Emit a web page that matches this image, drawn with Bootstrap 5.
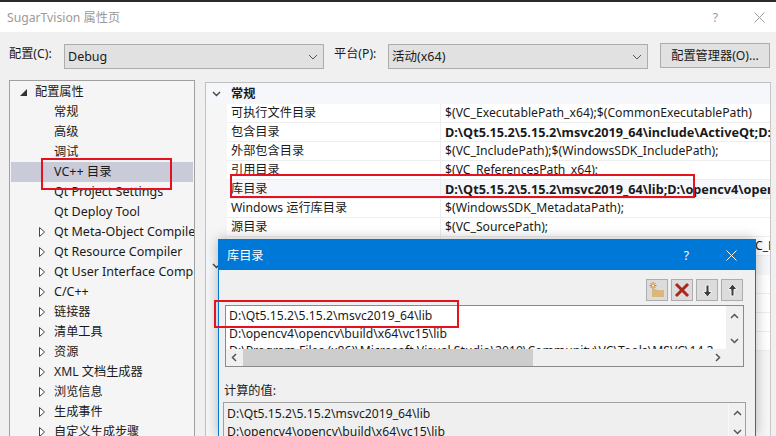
<!DOCTYPE html>
<html lang="zh"><head><meta charset="utf-8">
<link href="https://cdn.jsdelivr.net/npm/bootstrap@5.3.0/dist/css/bootstrap.min.css" rel="stylesheet">
<style>
html,body{width:776px;height:436px;overflow:hidden}
body{background:#f0f0f0;font:12.2px/19px "Noto Sans","Noto Sans CJK SC",sans-serif;color:#1a1a1a;position:relative}
.topline{height:2px;background:#2b2b2b}
.titlebar{height:30px;background:#fff;color:#9a9a9a;padding:0 11px 0 7px;font-size:12.2px}
.titlebar .q{margin-right:36px}
.cfg{height:48px;padding:12px 6px 0 9px}
.flab{width:55px;flex:none;white-space:nowrap}
.flab2{width:54px;flex:none;white-space:nowrap}
.combo{height:25px;background:#e1e1e1;border:1px solid #adadad;padding:0 5px 0 3px;font-size:12.5px;flex:none}
.c1{width:260px;margin:0 10px 0 0}
.c2{width:260px;margin:0 12px 0 0}
.cbtn{width:110px;height:25px;flex:none;background:#e1e1e1;border:1px solid #adadad;margin-top:-1px;border-radius:0;font-size:12.2px;padding:0;line-height:22px;color:#1a1a1a}
.mainrow{height:356px;padding-left:9px}
.tree{width:186px;height:356px;border:1px solid #a0a0a0;border-bottom:0;background:#f5f5f5;overflow:hidden;padding-top:1px}
.tnode{height:20px;line-height:20px;padding-left:44px;white-space:nowrap;overflow:hidden}
.tnode.sel{background:#c9cbd8;margin:0 1px;padding-left:43px}
.tnode.exp{padding-left:10px}
.lat{font-size:12.5px}
.tri{display:block;width:6px;height:10px;flex:none}
.tnode.hasc{padding-left:29px;display:flex;gap:9px;align-items:center}
.grid{width:566px;height:354px;margin:2px 0 0 10px;border:1px solid #c0c0c0;border-bottom:0;border-right-color:#c8c8c8;background:#f6f6f6;overflow:hidden}
.grow{height:19px;line-height:18px;display:flex;background:#fff;margin-left:21px;border-bottom:1px solid #eee;white-space:nowrap}
.grow.cap{background:#f5f7fa;margin-left:0;font-weight:700;height:21px;border:0;align-items:center;line-height:21px}
.grow.capb{height:19px}
.grow.cap svg{margin:0 10px 0 6px;flex:none}
.nm{width:213px;padding-left:4px;flex:none}
.vl{flex:1;border-left:1px solid #eee;padding-left:4px;overflow:hidden}
.vb{font-weight:700;font-size:12.7px}
.grow.hot{background:#f5f7fa}
.dlg{position:absolute;left:218px;top:239px;width:538px;height:197px;border:1px solid #0078d7;border-bottom:0;background:#f0f0f0;box-shadow:0 0 12px rgba(0,0,0,.28)}
.dtitle{height:30px;background:#0078d7;color:#fff;padding:0 18px 0 8px}
.dq{margin-right:37px}
.tools{height:35px;padding:9px 12px 0 0;gap:3px}
.tb{width:22px;height:22px;background:#dcdcdc;border:1px solid #adadad;padding:0;border-radius:0;display:flex;align-items:center;justify-content:center}
.lbox{margin-left:6px;width:519px;height:62px;background:#fff;border:1px solid #8a8a8a;position:relative;overflow:hidden}
.ltext{padding-left:3px;white-space:nowrap;line-height:17.5px;padding-top:1px;height:43px;overflow:hidden;width:500px}
.vsb{position:absolute;right:0;top:0;bottom:0;width:17px;background:#f0f0f0}
.hsb{position:absolute;left:0;right:17px;bottom:0;height:17px;background:#f0f0f0}
.thumb{position:absolute;left:17px;top:0;bottom:0;width:290px;background:#cdcdcd}
.sbi{position:absolute}
.clabel{margin:14px 0 0 5px;height:21px}
.cbox{margin-left:4px;width:523px;height:60px;border:1px solid #a0a0a0;background:#efefef;position:relative;padding:2px 0 0 3px;white-space:nowrap;line-height:17.5px}
.cbox .vsb{border-left:1px solid #f8f8f8}
.redbox{position:absolute;border:2px solid #e6121f;pointer-events:none}
.r1{left:41px;top:158px;width:131px;height:32px}
.r2{left:230px;top:174px;width:465px;height:24px}
.r3{left:214px;top:300px;width:245px;height:28px}
</style></head><body>
<div class="topline"></div>
<div class="titlebar d-flex align-items-center justify-content-between">
<span>SugarTvision 属性页</span>
<span class="d-flex align-items-center"><span class="q">?</span><svg width="11" height="11" viewBox="0 0 11 11"><path d="M.5.5l10 10M10.500.5l-10 10" stroke="#9a9a9a" fill="none"/></svg></span>
</div>
<div class="cfg d-flex">
<span class="flab">配置(C):</span>
<div class="combo c1 d-flex justify-content-between align-items-center"><span>Debug</span><svg width="10" height="6" viewBox="0 0 10 6"><path d="M1 1l4 4 4-4" stroke="#555" fill="none"/></svg></div>
<span class="flab2">平台(P):</span>
<div class="combo c2 d-flex justify-content-between align-items-center"><span>活动(x64)</span><svg width="10" height="6" viewBox="0 0 10 6"><path d="M1 1l4 4 4-4" stroke="#555" fill="none"/></svg></div>
<button class="btn cbtn">配置管理器(O)...</button>
</div>
<div class="mainrow d-flex">
<div class="tree">
<div class="tnode exp"><svg class="me-2" width="7" height="7" viewBox="0 0 7 7"><path d="M7 0v7H0z" fill="#333"/></svg>配置属性</div>
<div class="tnode">常规</div><div class="tnode">高级</div><div class="tnode">调试</div>
<div class="tnode sel lat">VC++ 目录</div>
<div class="tnode lat">Qt Project Settings</div><div class="tnode lat">Qt Deploy Tool</div>
<div class="tnode hasc lat"><svg class="tri" viewBox="0 0 6 10"><path d="M.5.5l5 4.500-5 4.500z" fill="#fff" stroke="#444"/></svg>Qt Meta-Object Compiler</div>
<div class="tnode hasc lat"><svg class="tri" viewBox="0 0 6 10"><path d="M.5.5l5 4.500-5 4.500z" fill="#fff" stroke="#444"/></svg>Qt Resource Compiler</div>
<div class="tnode hasc lat"><svg class="tri" viewBox="0 0 6 10"><path d="M.5.5l5 4.500-5 4.500z" fill="#fff" stroke="#444"/></svg>Qt User Interface Compiler</div>
<div class="tnode hasc lat"><svg class="tri" viewBox="0 0 6 10"><path d="M.5.5l5 4.500-5 4.500z" fill="#fff" stroke="#444"/></svg>C/C++</div>
<div class="tnode hasc"><svg class="tri" viewBox="0 0 6 10"><path d="M.5.5l5 4.500-5 4.500z" fill="#fff" stroke="#444"/></svg>链接器</div>
<div class="tnode hasc"><svg class="tri" viewBox="0 0 6 10"><path d="M.5.5l5 4.500-5 4.500z" fill="#fff" stroke="#444"/></svg>清单工具</div>
<div class="tnode hasc"><svg class="tri" viewBox="0 0 6 10"><path d="M.5.5l5 4.500-5 4.500z" fill="#fff" stroke="#444"/></svg>资源</div>
<div class="tnode hasc"><svg class="tri" viewBox="0 0 6 10"><path d="M.5.5l5 4.500-5 4.500z" fill="#fff" stroke="#444"/></svg>XML 文档生成器</div>
<div class="tnode hasc"><svg class="tri" viewBox="0 0 6 10"><path d="M.5.5l5 4.500-5 4.500z" fill="#fff" stroke="#444"/></svg>浏览信息</div>
<div class="tnode hasc"><svg class="tri" viewBox="0 0 6 10"><path d="M.5.5l5 4.500-5 4.500z" fill="#fff" stroke="#444"/></svg>生成事件</div>
<div class="tnode hasc"><svg class="tri" viewBox="0 0 6 10"><path d="M.5.5l5 4.500-5 4.500z" fill="#fff" stroke="#444"/></svg>自定义生成步骤</div>
</div>
<div class="grid">
<div class="grow cap"><svg width="9" height="6" viewBox="0 0 9 6"><path d="M1 1l3.500 3.500L8 1" stroke="#444" stroke-width="1.400" fill="none"/></svg>常规</div>
<div class="grow"><div class="nm">可执行文件目录</div><div class="vl">$(VC_ExecutablePath_x64);$(CommonExecutablePath)</div></div>
<div class="grow"><div class="nm">包含目录</div><div class="vl vb">D:\Qt5.15.2\5.15.2\msvc2019_64\include\ActiveQt;D:\Qt5.15.2</div></div>
<div class="grow"><div class="nm">外部包含目录</div><div class="vl">$(VC_IncludePath);$(WindowsSDK_IncludePath);</div></div>
<div class="grow"><div class="nm">引用目录</div><div class="vl">$(VC_ReferencesPath_x64);</div></div>
<div class="grow hot"><div class="nm">库目录</div><div class="vl vb">D:\Qt5.15.2\5.15.2\msvc2019_64\lib;D:\opencv4\opencv\build</div></div>
<div class="grow"><div class="nm">Windows 运行库目录</div><div class="vl">$(WindowsSDK_MetadataPath);</div></div>
<div class="grow"><div class="nm">源目录</div><div class="vl">$(VC_SourcePath);</div></div>
<div class="grow"><div class="nm"></div><div class="vl">$(CommonExcludePath);$(VC_ExecutablePath_x64);$(VC_LibraryPath_x64)</div></div>
<div class="grow cap capb"><svg width="9" height="6" viewBox="0 0 9 6"><path d="M1 1l3.500 3.500L8 1" stroke="#444" stroke-width="1.400" fill="none"/></svg></div>
<div class="grow"><div class="nm"></div><div class="vl"></div></div>
<div class="grow"><div class="nm"></div><div class="vl"></div></div>
<div class="grow"><div class="nm"></div><div class="vl"></div></div>
<div class="grow"><div class="nm"></div><div class="vl"></div></div>
</div>
</div>
<div class="dlg">
<div class="dtitle d-flex justify-content-between align-items-center"><span>库目录</span><span class="d-flex align-items-center"><span class="dq">?</span><svg width="11" height="11" viewBox="0 0 11 11"><path d="M.5.5l10 10M10.500.5l-10 10" stroke="#fff" fill="none"/></svg></span></div>
<div class="tools d-flex justify-content-end">
<button class="tb" aria-label="新建"><svg width="16" height="16" viewBox="0 0 16 16"><path d="M3 7h4l1 1h7v7H3z" fill="#dcb77a"/><path d="M4 0v7M.5 3.500h7M1.500 1l5 5M6.500 1l-5 5" stroke="#d9820f"/><circle cx="4" cy="3.500" r="1" fill="#fff"/></svg></button>
<button class="tb" aria-label="删除"><svg width="16" height="16" viewBox="0 0 16 16"><path d="M2 2l12 12M14 2L2 14" stroke="#a8281c" stroke-width="3" fill="none"/></svg></button>
<button class="tb" aria-label="下移"><svg width="13" height="15" viewBox="0 0 13 15"><path d="M6.500 14L2 8.500h3V2h3v6.500h3z" fill="#3c3c3c" stroke="#f4f4f4"/></svg></button>
<button class="tb" aria-label="上移"><svg width="13" height="15" viewBox="0 0 13 15"><path d="M6.500 1L11 6.500H8V13H5V6.500H2z" fill="#3c3c3c" stroke="#f4f4f4"/></svg></button>
</div>
<div class="lbox">
<div class="ltext">D:\Qt5.15.2\5.15.2\msvc2019_64\lib<br>D:\opencv4\opencv\build\x64\vc15\lib<br>D:\Program Files (x86)\Microsoft Visual Studio\2019\Community\VC\Tools\MSVC\14.2</div>
<div class="vsb"><svg class="sbi" style="left:4px;top:7px" width="9" height="6" viewBox="0 0 9 6"><path d="M1 5l3.500-3.500L8 5" stroke="#555" stroke-width="1.500" fill="none"/></svg><svg class="sbi" style="left:4px;top:32px" width="9" height="6" viewBox="0 0 9 6"><path d="M1 1l3.500 3.500L8 1" stroke="#555" stroke-width="1.500" fill="none"/></svg></div>
<div class="hsb"><div class="thumb"></div><svg class="sbi" style="left:5px;top:4px" width="6" height="9" viewBox="0 0 6 9"><path d="M5 1L1.500 4.500 5 8" stroke="#555" stroke-width="1.500" fill="none"/></svg><svg class="sbi" style="right:5px;top:4px" width="6" height="9" viewBox="0 0 6 9"><path d="M1 1l3.500 3.500L1 8" stroke="#555" stroke-width="1.500" fill="none"/></svg></div>
</div>
<div class="clabel">计算的值:</div>
<div class="cbox">D:\Qt5.15.2\5.15.2\msvc2019_64\lib<br>D:\opencv4\opencv\build\x64\vc15\lib<div class="vsb"><svg class="sbi" style="left:4px;top:7px" width="9" height="6" viewBox="0 0 9 6"><path d="M1 5l3.500-3.500L8 5" stroke="#555" stroke-width="1.500" fill="none"/></svg><svg class="sbi" style="left:4px;top:26px" width="9" height="6" viewBox="0 0 9 6"><path d="M1 1l3.500 3.500L8 1" stroke="#555" stroke-width="1.500" fill="none"/></svg></div></div>
</div>
<div class="redbox r1"></div><div class="redbox r2"></div><div class="redbox r3"></div>
</body></html>
